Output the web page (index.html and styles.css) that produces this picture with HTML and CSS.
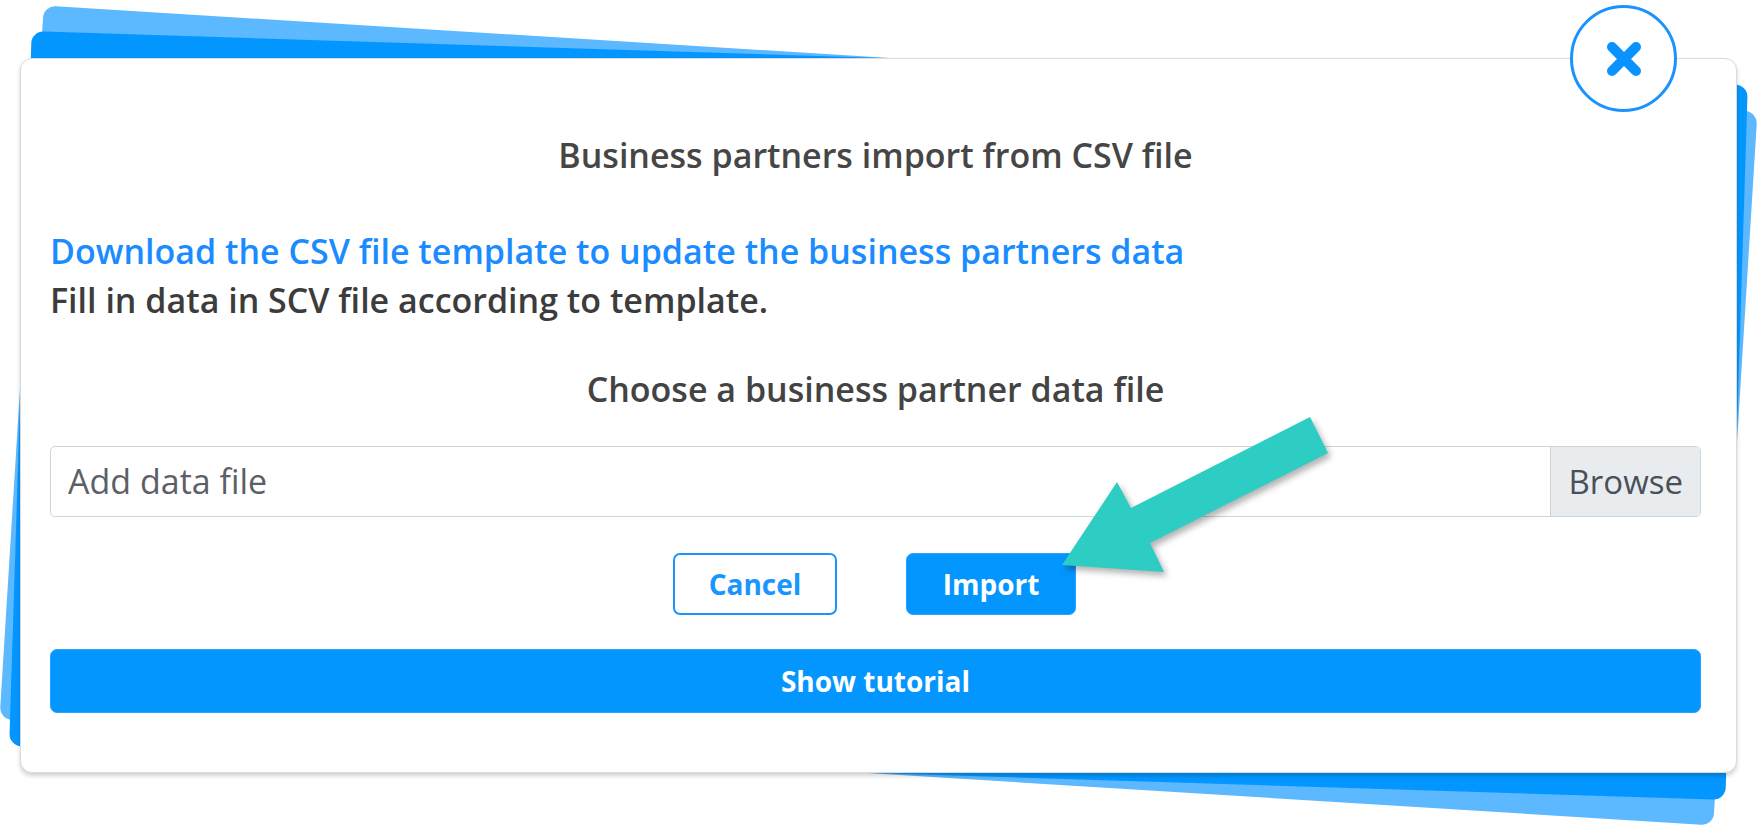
FILE: index.html
```html
<!DOCTYPE html>
<html lang="en">
<head>
  <meta charset="UTF-8" />
  <title>Business partners import</title>
  <link rel="stylesheet" href="styles.css">
</head>
<body>
  <div class="scene">
    <div class="stack">
      <!-- back sheets -->
      <div class="sheet sheet-back"></div>
      <div class="sheet sheet-mid"></div>

      <!-- MODAL -->
      <div class="card">
        <h2 class="title">Business partners import from CSV file</h2>

        <a class="template-link" href="#">Download the CSV file template to update the business partners data</a>
        <p class="hint">Fill in data in SCV file according to template.</p>

        <p class="choose">Choose a business partner data file</p>

        <label class="file-field">
          <span class="file-name">Add data file</span>
          <span class="file-browse">Browse</span>
        </label>

        <div class="actions">
          <button class="btn btn-outline">Cancel</button>
          <button class="btn btn-primary">Import</button>
        </div>

        <button class="btn btn-primary btn-wide">Show tutorial</button>
      </div>
    </div>

    <button class="close" aria-label="Close">
      <svg width="36" height="36" viewBox="0 0 36 36">
        <path d="M6 6 L30 30 M30 6 L6 30" stroke="#0a93ff" stroke-width="10" stroke-linecap="round" fill="none"/>
      </svg>
    </button>

    <svg class="pointer" width="320" height="200" viewBox="0 0 320 200">
      <polygon points="22,165 77,82 91,108 270,17 288,53 110,143 124,172" fill="#2ecdc4"/>
    </svg>
  </div>
</body>
</html>
```

FILE: styles.css
```css
body {
  margin: 0;
  background-color: #fff;
  font-family: "Open Sans", "Liberation Sans", sans-serif;
  color: #444;
}

.scene {
  position: relative;
  width: 1762px;
  height: 833px;
  padding: 58px 0 0 20px;
  box-sizing: border-box;
}

.stack {
  display: grid;
  width: 1717px;
  height: 715px;
}

.sheet,
.card {
  grid-area: 1 / 1;
  border-radius: 12px;
}

.sheet-back {
  background-color: #5cb8ff;
  transform: rotate(3.55deg);
}

.sheet-mid {
  background-color: #0496ff;
  transform: rotate(1.8deg);
}

.card {
  position: relative;
  z-index: 1;
  background-color: #fff;
  border: 1px solid #dadada;
  box-shadow: 0 3px 4px rgba(0, 0, 0, 0.18);
  padding: 70px 35px 0 29px;
  box-sizing: border-box;
  display: flex;
  flex-direction: column;
}

.title {
  margin: 0;
  font-size: 34px;
  font-weight: 600;
  line-height: 52px;
  text-align: center;
  color: #464646;
}

.template-link {
  margin-top: 46px;
  font-size: 34px;
  font-weight: 600;
  line-height: 49px;
  color: #1a8cff;
  text-decoration: none;
}

.hint {
  margin: 0;
  font-size: 34px;
  font-weight: 600;
  line-height: 49px;
  color: #3c3c3c;
}

.choose {
  margin: 39px 0 0;
  font-size: 34px;
  font-weight: 600;
  line-height: 50px;
  text-align: center;
  color: #434343;
}

.file-field {
  margin-top: 32px;
  display: flex;
  height: 71px;
  border: 1px solid #cfd4d9;
  border-radius: 5px;
  box-sizing: border-box;
  overflow: hidden;
  line-height: 69px;
}

.file-name {
  flex: 1;
  padding-left: 17px;
  font-size: 34px;
  color: #5c6066;
}

.file-browse {
  padding: 0 17px 0 18px;
  font-size: 33px;
  background-color: #e9ecef;
  border-left: 1px solid #cfd4d9;
  color: #4a5057;
}

.actions {
  margin-top: 36px;
  display: flex;
  justify-content: center;
  gap: 69px;
  padding-right: 2px;
}

.btn {
  font-family: "Open Sans", "Liberation Sans", sans-serif;
  font-size: 28px;
  font-weight: 700;
  height: 62px;
  border-radius: 7px;
  box-sizing: border-box;
  cursor: pointer;
}

.btn-outline {
  width: 164px;
  background-color: #fff;
  border: 2px solid #1a95ff;
  color: #1a95ff;
}

.btn-primary {
  width: 170px;
  background-color: #0496ff;
  border: 1px solid #2aa3ff;
  color: #fff;
}

.btn-wide {
  width: auto;
  margin-top: 34px;
  height: 64px;
}

.close {
  position: absolute;
  z-index: 2;
  left: 1570px;
  top: 5px;
  width: 107px;
  height: 107px;
  border-radius: 50%;
  border: 3px solid #1a93ff;
  background-color: #fff;
  padding: 0;
  display: flex;
  align-items: center;
  justify-content: center;
}

.pointer {
  position: absolute;
  z-index: 2;
  left: 1040px;
  top: 400px;
  filter: drop-shadow(3px 4px 3px rgba(0, 0, 0, 0.3));
}
```
